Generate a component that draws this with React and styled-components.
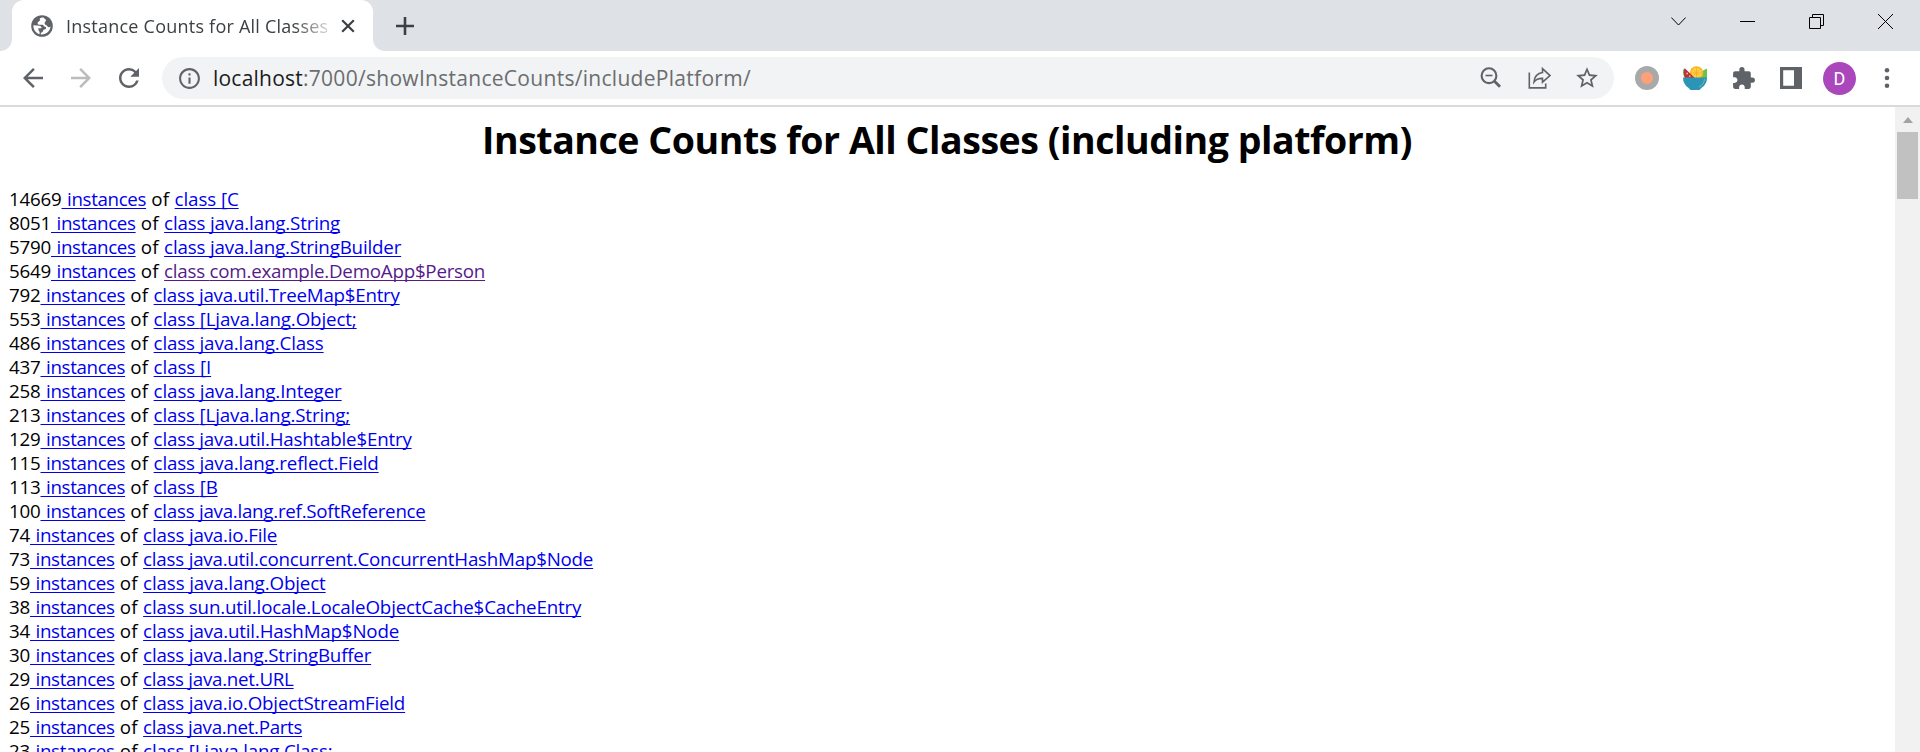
import React from "react";
import styled, { createGlobalStyle } from "styled-components";
import {
  MdArrowBack,
  MdArrowForward,
  MdRefresh,
  MdInfoOutline,
  MdStarBorder,
  MdExtension,
} from "react-icons/md";

const GlobalStyle = createGlobalStyle`
  html, body { margin: 0; padding: 0; overflow: hidden; }
  body { background: #fff; font-family: "Open Sans", "Noto Sans", sans-serif; }
  svg { display: block; flex: none; }
`;

const Browser = styled.div`
  display: flex;
  flex-direction: column;
  width: 1920px;
  height: 752px;
  overflow: hidden;
`;

const TabStrip = styled.header`
  display: flex;
  flex: none;
  height: 51px;
  padding-left: 12px;
  background: #dee1e6;
`;

const Tab = styled.div`
  position: relative;
  display: flex;
  box-sizing: border-box;
  width: 361px;
  height: 51px;
  padding: 1px 18px 0 19px;
  align-items: center;
  background: #fff;
  border-radius: 12px 12px 0 0;

  &::before,
  &::after {
    content: "";
    position: absolute;
    bottom: 0;
    width: 12px;
    height: 12px;
  }
  &::before {
    left: -12px;
    background: radial-gradient(circle at 0 0, transparent 11.5px, #fff 12.5px);
  }
  &::after {
    right: -12px;
    background: radial-gradient(circle at 100% 0, transparent 11.5px, #fff 12.5px);
  }
`;

const TabTitle = styled.span`
  width: 265px;
  margin: 0 10px 0 13px;
  overflow: hidden;
  white-space: nowrap;
  font-size: 18px;
  line-height: 26px;
  letter-spacing: 0.23px;
  color: #3c4043;
  mask-image: linear-gradient(to right, #000 228px, rgba(0, 0, 0, 0.15) 264px);
`;

const NewTab = styled.div`
  padding: 17px 0 0 23px;
`;

const WindowControls = styled.div`
  display: flex;
  gap: 54px;
  margin-left: auto;
  padding: 14px 27px 0 0;
`;

const Toolbar = styled.div`
  display: flex;
  flex: none;
  box-sizing: border-box;
  height: 56px;
  padding: 0 22px 0 18px;
  align-items: center;
  border-bottom: 2px solid #dadadb;
  color: #5f6368;
`;

const Navigation = styled.div`
  display: flex;
  gap: 18px;
  width: 144px;
`;

const AddressBar = styled.div`
  display: flex;
  box-sizing: border-box;
  width: 1452px;
  height: 42px;
  padding: 0 14px 0 15px;
  align-items: center;
  background: #f1f3f4;
  border-radius: 21px;
`;

const Url = styled.span`
  margin: 0 auto 0 11px;
  font-size: 21px;
  line-height: 30px;
  letter-spacing: 0.29px;
  white-space: pre;
  color: #6b6d70;
`;

const Host = styled.span`
  letter-spacing: 0.22px;
  color: #1b1c1e;
`;

const AddressActions = styled.div`
  display: flex;
  gap: 22px;
  align-items: center;
`;

const Extensions = styled.div`
  display: flex;
  flex: 1;
  gap: 24px;
  padding-left: 21px;
  align-items: center;
`;

const RecorderBadge = styled.span`
  box-sizing: border-box;
  width: 24px;
  height: 24px;
  border: 6px solid #a9a9a9;
  border-radius: 50%;
  background: #ffa07a;
`;

const Avatar = styled.span`
  width: 33px;
  height: 33px;
  margin: 0 -4px 0 -3px;
  border-radius: 50%;
  background: #ab47bc;
  color: #fff;
  font: 18px/34px Roboto, sans-serif;
  text-align: center;
`;

const Viewport = styled.div`
  display: flex;
  flex: 1;
  min-height: 0;
`;

const Page = styled.main`
  flex: 1;
  padding: 7px 10px 0 9px;
  overflow: hidden;
  font-size: 18.75px;
  color: #000;
`;

const Heading = styled.h1`
  margin: 0 0 22px;
  font-size: 37.5px;
  line-height: 51px;
  font-weight: 700;
  letter-spacing: -0.455px;
  text-align: center;
`;

const Row = styled.div`
  height: 24px;
  line-height: 24px;
  white-space: pre;
  letter-spacing: -0.22px;
`;

const InstancesLink = styled.a`
  color: #0000ee;
  letter-spacing: -0.35px;
  word-spacing: 1px;
  text-decoration: underline 1px;
  text-underline-offset: 2px;
  text-decoration-skip-ink: none;
`;

const ClassLink = styled(InstancesLink)`
  color: ${(p) => (p.$visited ? "#551a8b" : "#0000ee")};
  letter-spacing: ${(p) => p.$tracking}px;
  word-spacing: 0;
`;

const Of = styled.span`
  letter-spacing: 0.29px;
`;

const Scrollbar = styled.div`
  display: flex;
  flex-direction: column;
  align-items: center;
  width: 25px;
  background: #f1f1f1;
`;

const ScrollArrow = styled.span`
  width: 0;
  height: 0;
  margin: 10px 0 9px;
  border: 5.5px solid transparent;
  border-top: 0;
  border-bottom: 6px solid #a3a3a3;
`;

const ScrollThumb = styled.span`
  width: 21px;
  height: 67px;
  background: #c1c1c1;
`;

const GlobeIcon = () => (
  <svg width="22" height="22" viewBox="0 0 22 22">
    <circle cx="11" cy="11" r="10.8" fill="#5f6368" />
    <path
      d="M12.6 2.5C8.8 2.4 8.2 4 9.2 5.2C8 6.4 6.6 6.8 6.6 8.2C6.6 9.4 7.8 9.8 9 9.8H11.2C12.4 9.8 12.8 10.6 12.8 11.6C14.4 11.6 15.4 12.2 15 13.4C14.4 14.6 12.2 14.4 12 15.8C11.8 17.2 10.8 17.6 9.8 17.8V19.4C15 20 19.4 16 19.5 11.5C18.4 12.4 17 12.4 16.4 11.2C15.8 10 14 10.2 13.6 8.6C13.2 7 15 6.6 15 5.2C15 4 13.2 4 12.6 2.5Z M2.4 10.2C2 14.6 5 18.2 8.6 19.2V17.2C8.6 16.2 7.4 15.8 7.4 14.6V13.2H9.8C10.6 13.2 10.8 12.4 10.2 11.8C9 10.6 7.2 10.6 5.6 10.6Z"
      fill="#fff"
    />
  </svg>
);

const CloseTabIcon = () => (
  <svg width="14" height="14" viewBox="0 0 14 14" stroke="#3c4043" strokeWidth="2.2">
    <path d="M1.2 1.2L12.8 12.8M12.8 1.2L1.2 12.8" />
  </svg>
);

const PlusIcon = () => (
  <svg width="18" height="18" viewBox="0 0 18 18" stroke="#3c4043" strokeWidth="2.6">
    <path d="M9 0V18M0 9H18" />
  </svg>
);

const ChevronIcon = () => (
  <svg width="15" height="15" viewBox="0 0 15 15" fill="none" stroke="#000">
    <path d="M0.3 3.5L7.5 11L14.7 3.5" />
  </svg>
);

const MinimizeIcon = () => (
  <svg width="15" height="15" viewBox="0 0 15 15">
    <path d="M0 7H15V8H0Z" />
  </svg>
);

const RestoreIcon = () => (
  <svg width="15" height="15" viewBox="0 0 15 15" fill="none" stroke="#000">
    <path d="M0.5 3.5H11.5V14.5H0.5ZM3.5 3.5V0.5H14.5V11.5H11.5" />
  </svg>
);

const CloseIcon = () => (
  <svg width="15" height="15" viewBox="0 0 15 15" stroke="#000">
    <path d="M0 0L15 15M15 0L0 15" />
  </svg>
);

const ZoomOutIcon = () => (
  <svg width="27" height="24" viewBox="0 0 27 24" fill="none" stroke="#5f6368">
    <circle cx="10" cy="9.7" r="7.4" strokeWidth="2.1" />
    <path d="M15 14.7L21 20.7" strokeWidth="2.8" />
    <path d="M6.5 9.5H13.5" strokeWidth="1.6" />
  </svg>
);

const ShareIcon = () => (
  <svg width="24" height="24" viewBox="0 0 24 24" fill="none" stroke="#5f6368" strokeWidth="1.6">
    <path d="M1.3 6.5V21.9H17.7V17.5" />
    <path d="M14.5 2.6L22 9.6L14.5 16.2V12.4C10.4 12.3 8 13.4 6 16C6.5 11 9 7.2 14.5 6.5Z" strokeLinejoin="miter" />
  </svg>
);

const FruitBowlIcon = () => (
  <svg width="24" height="24" viewBox="0 0 24 24">
    <path d="M1 2.5L11 12H2Q-1 7 1 2.5Z" fill="#4f8f3a" />
    <path d="M24 2.5V12H16Q17 5 24 2.5Z" fill="#69c44b" />
    <circle cx="13.5" cy="7" r="6.8" fill="#fbb51d" />
    <circle cx="13.5" cy="7" r="5.2" fill="#ffd052" />
    <path d="M13.5 2V12M8.5 7H18.5M10 3.5L17 10.5M17 3.5L10 10.5" stroke="#f7a91b" strokeWidth="0.8" />
    <path d="M1.8 2.2L11.8 12H2Q0 7 1.8 2.2Z" fill="#ba3336" />
    <path d="M3.4 6.8H4.9V8.3H3.4ZM6 9.4H7.4V10.8H6Z" fill="#f3d5c5" />
    <path d="M0 11.5H24Q24 18 19 21.5Q17.5 22.5 16.5 24H7.5Q6.5 22.5 5 21.5Q0 18 0 11.5Z" fill="#2b95b6" />
    <path d="M21.5 13Q21 18.5 16 21" stroke="#83b7a1" strokeWidth="1" fill="none" />
  </svg>
);

const SidePanelIcon = () => (
  <svg width="22" height="22" viewBox="0 0 22 22">
    <path d="M0 0H22V22H0ZM3.2 3.2V18.8H14V3.2Z" fill="#5f6368" fillRule="evenodd" />
  </svg>
);

const MenuIcon = () => (
  <svg width="22" height="22" viewBox="0 0 22 22" fill="#5f6368">
    <circle cx="11" cy="3.3" r="2.3" />
    <circle cx="11" cy="11" r="2.3" />
    <circle cx="11" cy="18.7" r="2.3" />
  </svg>
);

const INSTANCES = [
  { count: 14669, name: "[C", tracking: -0.1 },
  { count: 8051, name: "java.lang.String", tracking: -0.161 },
  { count: 5790, name: "java.lang.StringBuilder", tracking: -0.182 },
  { count: 5649, name: "com.example.DemoApp$Person", tracking: -0.24, visited: true },
  { count: 792, name: "java.util.TreeMap$Entry", tracking: -0.258 },
  { count: 553, name: "[Ljava.lang.Object;", tracking: -0.133 },
  { count: 486, name: "java.lang.Class", tracking: -0.158 },
  { count: 437, name: "[I", tracking: -0.093 },
  { count: 258, name: "java.lang.Integer", tracking: -0.122 },
  { count: 213, name: "[Ljava.lang.String;", tracking: -0.155 },
  { count: 129, name: "java.util.Hashtable$Entry", tracking: -0.2 },
  { count: 115, name: "java.lang.reflect.Field", tracking: -0.172 },
  { count: 113, name: "[B", tracking: -0.14 },
  { count: 100, name: "java.lang.ref.SoftReference", tracking: -0.261 },
  { count: 74, name: "java.io.File", tracking: -0.186 },
  { count: 73, name: "java.util.concurrent.ConcurrentHashMap$Node", tracking: -0.228 },
  { count: 59, name: "java.lang.Object", tracking: -0.135 },
  { count: 38, name: "sun.util.locale.LocaleObjectCache$CacheEntry", tracking: -0.189 },
  { count: 34, name: "java.util.HashMap$Node", tracking: -0.174 },
  { count: 30, name: "java.lang.StringBuffer", tracking: -0.213 },
  { count: 29, name: "java.net.URL", tracking: -0.272 },
  { count: 26, name: "java.io.ObjectStreamField", tracking: -0.217 },
  { count: 25, name: "java.net.Parts", tracking: -0.318 },
  { count: 23, name: "[Ljava.lang.Class;", tracking: -0.2 },
];

export default function App() {
  return (
    <Browser>
      <GlobalStyle />
      <TabStrip>
        <Tab>
          <GlobeIcon />
          <TabTitle>Instance Counts for All Classes</TabTitle>
          <CloseTabIcon />
        </Tab>
        <NewTab>
          <PlusIcon />
        </NewTab>
        <WindowControls>
          <ChevronIcon />
          <MinimizeIcon />
          <RestoreIcon />
          <CloseIcon />
        </WindowControls>
      </TabStrip>
      <Toolbar>
        <Navigation>
          <MdArrowBack size={30} />
          <MdArrowForward size={30} color="#bbbcbe" />
          <MdRefresh size={30} />
        </Navigation>
        <AddressBar>
          <MdInfoOutline size={25} />
          <Url>
            <Host>localhost</Host>:7000/showInstanceCounts/includePlatform/
          </Url>
          <AddressActions>
            <ZoomOutIcon />
            <ShareIcon />
            <MdStarBorder size={26} />
          </AddressActions>
        </AddressBar>
        <Extensions>
          <RecorderBadge />
          <FruitBowlIcon />
          <MdExtension size={25} />
          <SidePanelIcon />
          <Avatar>D</Avatar>
          <MenuIcon />
        </Extensions>
      </Toolbar>
      <Viewport>
        <Page>
          <Heading>Instance Counts for All Classes (including platform)</Heading>
          {INSTANCES.map(({ count, name, tracking, visited }) => (
            <Row key={name}>
              {count}
              <InstancesLink> instances</InstancesLink>
              <Of> of </Of>
              <ClassLink $tracking={tracking} $visited={visited}>
                class {name}
              </ClassLink>
            </Row>
          ))}
        </Page>
        <Scrollbar>
          <ScrollArrow />
          <ScrollThumb />
        </Scrollbar>
      </Viewport>
    </Browser>
  );
}
